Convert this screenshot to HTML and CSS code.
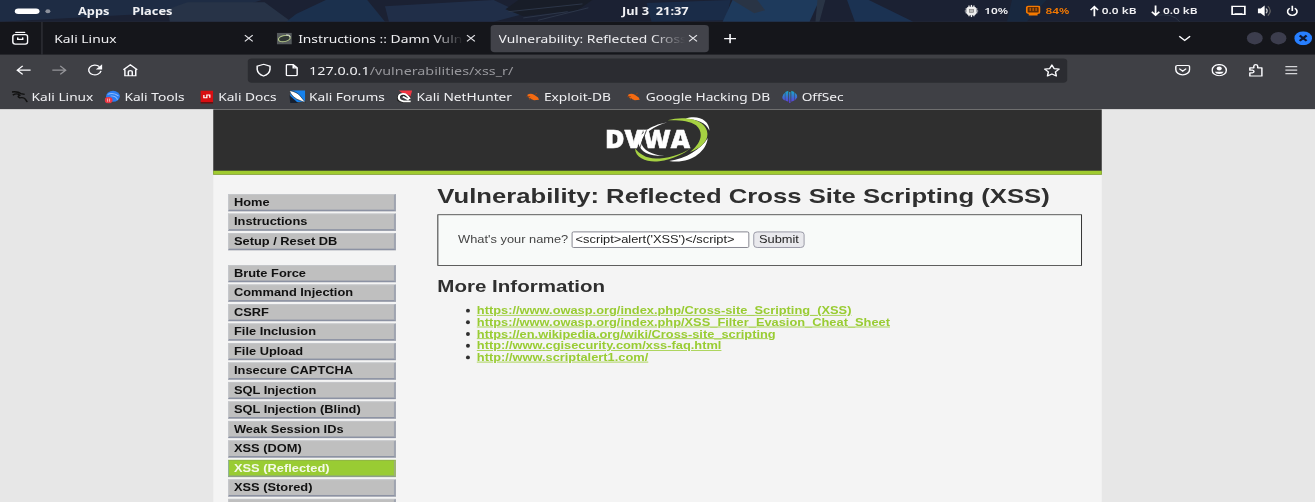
FILE: index.html
```html
<!DOCTYPE html>
<html lang="en">
<head>
<meta charset="utf-8">
<title>Vulnerability: Reflected Cross Site Scripting (XSS)</title>
<link rel="stylesheet" href="styles.css">
</head>
<body>
<div class="screen">
  <header class="topbar">
    <svg class="wallpaper" viewBox="0 0 1332 28" preserveAspectRatio="none">
      <path fill="#20304a" d="M0 0H265L235 12 0 28z"/>
      <path fill="#2b3a4e" d="M170 12L190 3H268L295 28H172z"/>
      <path fill="#1c3556" d="M300 18L330 0H372L390 28H290z"/>
      <path fill="#223350" d="M390 8L500 0 530 18 500 28H394z"/>
      <path fill="#171c25" d="M525 0H600L585 13 530 21 512 12z"/>
      <path fill="none" stroke="#354154" d="M515 15L590 5M530 23L575 15M545 26L596 10"/>
      <path fill="#1a3050" d="M655 4L740 0 735 26 660 28z"/>
      <path fill="#20436a" d="M742 0H830L820 28H732z"/>
      <path fill="#2e3b4c" d="M742 0H767L775 13 764 17zM828 0H836L830 28H826z"/>
      <path fill="#1c385d" d="M858 0H880L925 28H866z"/>
      <path fill="#182b43" d="M1025 0H1060L1040 28H1020z"/>
      <path fill="none" stroke="#384250" d="M1170 20Q1188 16 1195 28"/>
    </svg>
    <span class="workspaces"><i class="pill"></i><i class="dot"></i></span>
    <span>Apps</span>
    <span>Places</span>
    <span>Jul 3&nbsp; 21:37</span>
    <svg class="ic" width="14" height="16" viewBox="0 0 14 16"><rect x="2" y="2.500" width="10" height="11" rx="3" fill="#eee"/><path stroke="#eee" stroke-width="1.300" d="M4.500 1V15M7 0V16M9.500 1V15M1 5.500H13M0 8H14M1 10.500H13"/><rect x="5" y="6" width="4" height="4" fill="#bbb" stroke="#777" stroke-width=".7"/></svg>
    <span class="stat">10%</span>
    <svg class="ic" width="15" height="14" viewBox="0 0 15 14"><rect x="1" y="1" width="13" height="9" rx="2" fill="#5a2c08" stroke="#f57900" stroke-width="1.800"/><path stroke="#f57900" stroke-width="1" d="M4.500 3V7M7.500 3V7M10.500 3V7"/><path stroke="#f57900" stroke-width="2" d="M3 12H12"/></svg>
    <span class="stat hot">84%</span>
    <svg class="ic" width="9" height="16" viewBox="0 0 9 16"><path fill="none" stroke="#fff" stroke-width="1.800" d="M4.500 15V3M.7 7L4.500 2.500 8.300 7"/></svg>
    <span class="stat">0.0 kB</span>
    <svg class="ic" width="9" height="16" viewBox="0 0 9 16"><path fill="none" stroke="#fff" stroke-width="1.800" d="M4.500 1V13M.7 9L4.500 13.500 8.300 9"/></svg>
    <span class="stat">0.0 kB</span>
    <svg class="ic" width="15" height="14" viewBox="0 0 15 14"><path fill="none" stroke="#fff" stroke-width="1.800" d="M1 1H14V11.500H1z"/><path stroke="#fff" stroke-width="1.800" d="M3.500 10.800H11.500"/></svg>
    <svg class="ic" width="14" height="16" viewBox="0 0 14 16"><path fill="#fff" d="M0 5H3L7 1V15L3 11H0z"/><path fill="none" stroke="#ccc" stroke-width="1.300" d="M8.500 5Q10.500 8 8.500 11"/><path fill="none" stroke="#666" stroke-width="1.300" d="M10.300 2Q15 8 10.300 14"/></svg>
    <svg class="ic" width="12" height="16" viewBox="0 0 12 16"><path fill="none" stroke="#fff" stroke-width="1.700" d="M3.500 4.500A4.800 5 0 1 0 8.500 4.500M6 1.500V8"/></svg>
  </header>

  <div class="tabbar">
    <div class="tabview"><svg width="17" height="18" viewBox="0 0 17 18"><path fill="none" stroke="#fbfbfe" stroke-width="1.500" stroke-linecap="round" d="M4 1.500H13M3.500 4.500H13.500Q16 4.500 16 7V14Q16 16.500 13.500 16.500H3.500Q1 16.500 1 14V7Q1 4.500 3.500 4.500zM6 8.500V10.500H11V8.500"/></svg></div>
    <div class="tab tab-one"><span class="label">Kali Linux</span><svg class="x" viewBox="0 0 10 10"><path d="M1 1L9 9M9 1L1 9"/></svg></div>
    <div class="tab tab-two"><svg class="fav" width="16" height="15" viewBox="0 0 16 16"><path fill="#555a5c" d="M0 0H16V16H0z"/><ellipse cx="8" cy="8" rx="6.500" ry="4" transform="rotate(-18 8 8)" fill="#303735" stroke="#b5c98b" stroke-width="1.300"/><path fill="none" stroke="#eee" d="M10 3Q15 3 14 6"/></svg><span class="label fade">Instructions :: Damn Vulne</span><svg class="x" viewBox="0 0 10 10"><path d="M1 1L9 9M9 1L1 9"/></svg></div>
    <div class="tab tab-active"><span class="label fade">Vulnerability: Reflected Cross</span><svg class="x" viewBox="0 0 10 10"><path d="M1 1L9 9M9 1L1 9"/></svg></div>
    <svg class="plus" width="13" height="13" viewBox="0 0 13 13"><path stroke="#fbfbfe" stroke-width="1.600" d="M6.500 .5V12.500M.5 6.500H12.500"/></svg>
    <svg class="chevron" width="14" height="9" viewBox="0 0 14 9"><path fill="none" stroke="#fbfbfe" stroke-width="1.500" d="M1.500 1.500L7 7 12.500 1.500"/></svg>
    <div class="winbuttons"><i></i><i></i><svg width="18" height="18" viewBox="0 0 18 18"><circle cx="9" cy="9" r="9" fill="#277fff"/><path stroke="#101830" stroke-width="2.400" d="M5.500 5.500L12.500 12.500M12.500 5.500L5.500 12.500"/></svg></div>
  </div>

  <div class="navbar">
    <svg width="16" height="16" viewBox="0 0 16 16"><path d="M15 8H1.500M7 2.500L1.500 8 7 13.500"/></svg>
    <svg class="off" width="16" height="16" viewBox="0 0 16 16"><path d="M1 8H14.500M9 2.500L14.500 8 9 13.500"/></svg>
    <svg width="16" height="16" viewBox="0 0 16 16"><path d="M12.700 3.500A6.300 6.300 0 1 0 14.300 9"/><path fill="#fbfbfe" stroke="none" d="M15.500 .5V7H9z"/></svg>
    <svg width="16" height="18" viewBox="0 0 16 18"><path d="M1 8.500L8 2 15 8.500M2.500 8V16.200H13.500V8M6 16V11Q6 9.500 8 9.500T10 11V16"/></svg>
    <div class="urlbar">
      <svg width="16" height="18" viewBox="0 0 16 18"><path d="M8 1.500L14.500 4V8Q14 14 8 16.500 2 14 1.500 8V4z"/></svg>
      <svg width="13" height="16" viewBox="0 0 13 16"><path d="M2 1H8L12 5V14Q12 15 11 15H2Q1 15 1 14V2Q1 1 2 1zM8 1V5H12"/></svg>
      <span class="url"><b>127.0.0.1</b>/vulnerabilities/xss_r/</span>
      <svg width="17" height="17" viewBox="0 0 17 17"><path stroke-linejoin="round" d="M8.500 1.300L10.700 6 15.800 6.700 12.100 10.300 13 15.500 8.500 13 4 15.500 4.900 10.300 1.200 6.700 6.300 6z"/></svg>
    </div>
    <div class="actions">
      <svg width="16" height="16" viewBox="0 0 16 16"><path d="M2.500 2H13.500Q15 2 15 3.500V7A7 7 0 0 1 1 7V3.500Q1 2 2.500 2zM4.500 6L8 9.300 11.500 6"/></svg>
      <svg width="16" height="16" viewBox="0 0 16 16"><circle cx="8" cy="8" r="7.200"/><circle cx="8" cy="6" r="2.600" fill="#fbfbfe" stroke="none"/><path fill="#fbfbfe" stroke="none" d="M3.500 10H12.500Q11.500 13 8 13T3.500 10z"/></svg>
      <svg width="16" height="18" viewBox="0 0 16 18"><path stroke-linejoin="round" d="M2 16.500V12.500H4.500Q6.200 12.300 6.200 10.800T4.500 9H2V6H6V4Q6.200 2 8 2T10 4V6H14.200V16.500z"/></svg>
      <svg width="14" height="14" viewBox="0 0 14 14"><path opacity=".8" d="M1 2.500H13M1 7H13M1 11.500H13"/></svg>
    </div>
  </div>

  <div class="bookmarks">
    <svg width="17" height="18" viewBox="0 0 17 18"><path fill="none" stroke="#111" stroke-width="1.700" d="M0 3Q6 2 9 5L13 6M1 7Q5 4 8 7 5 9 8 10.500 12 9.500 13.500 12T15.500 16"/></svg><span>Kali Linux</span>
    <svg width="16" height="18" viewBox="0 0 16 18"><circle cx="8.500" cy="8.500" r="7" fill="#2b7cf2"/><path fill="none" stroke="#8fbdfb" stroke-width="1.200" d="M3 6Q9 3 14 8M6 8Q12 8 13 13"/><circle cx="4" cy="13.500" r="4" fill="#e83745"/><path stroke="#fbb" d="M3 11.500V15.500M5 11.500V15.500"/></svg><span>Kali Tools</span>
    <svg width="13" height="17" viewBox="0 0 13 17"><path fill="#d80e12" d="M0 0H13V15H0z"/><path fill="#611" d="M0 15H13V17H0z"/><path fill="none" stroke="#fff" stroke-width="1.300" d="M3.500 6V9.500H6.500V6H9.500V9.500"/></svg><span>Kali Docs</span>
    <svg width="17" height="18" viewBox="0 0 17 18"><path fill="#1682ec" d="M1 1H16V16H1z"/><path fill="#172030" d="M0 7L9 17H1z"/><path fill="#fff" stroke="#111" stroke-width=".6" d="M0 1Q8 3 11 8L16.500 16.500 12 14.500Q3 11 0 1z"/></svg><span>Kali Forums</span>
    <svg width="16" height="18" viewBox="0 0 16 18"><path fill="#f03642" d="M2 1H15.500L13 12z"/><path fill="none" stroke="#222" stroke-width="3.600" d="M13 10Q4 3 2 9T7 15H14"/><path fill="none" stroke="#fff" stroke-width="2.200" d="M13 12Q10 5 6 5.500T2 10 7 15H14M6 9L12 13"/></svg><span>Kali NetHunter</span>
    <svg width="14" height="14" viewBox="0 0 14 14"><path fill="#f46a11" d="M1 5Q4 2 8 4.500L12 8 13 11 8 11.500 3 9z"/><path stroke="#8b421d" d="M0 7L4 7M3 11L5 9M9 4L11 2.500"/></svg><span>Exploit-DB</span>
    <svg width="14" height="14" viewBox="0 0 14 14"><path fill="#f46a11" d="M1 5Q4 2 8 4.500L12 8 13 11 8 11.500 3 9z"/><path stroke="#8b421d" d="M0 7L4 7M3 11L5 9M9 4L11 2.500"/></svg><span>Google Hacking DB</span>
    <svg width="16" height="16" viewBox="0 0 16 16"><defs><linearGradient id="os" x1="0" y1="0" x2="0" y2="1"><stop offset="0" stop-color="#16a9ca"/><stop offset="1" stop-color="#6136da"/></linearGradient></defs><path fill="url(#os)" d="M3 3V13Q0 11 .5 8T3 3zM3.500 2L6.500 .5V14.500L3.500 13zM7.300 2H8.700V16H7.300zM9.500 .5L12.500 2V13L9.500 14.500zM13 3Q16 5 15.500 9L13 13z"/></svg><span>OffSec</span>
  </div>

  <main class="page">
    <div class="site">
      <div class="banner">
        <svg class="logo" viewBox="130 30 330 150" preserveAspectRatio="none">
          <path fill="#fff" d="M378 40C415 27 450 44 450 76 440 52 415 42 378 40zM445 98C440 142 390 177 330 167 380 160 425 132 445 98z"/>
          <path fill="#a6d142" d="M325 45C380 28 443 45 444 85 445 110 420 130 392 140 425 115 435 82 410 60 390 46 360 44 325 45z"/>
          <path fill="#fff" d="M325 51C270 60 235 90 238 115 245 140 270 153 315 152 280 148 250 135 247 112 250 85 285 62 325 51z"/>
          <path fill="#a6d142" d="M228 130C228 160 270 173 300 168 340 162 375 145 395 128 365 150 320 160 290 160 260 160 240 145 228 130z"/>
          <text x="138" y="128" textLength="254" lengthAdjust="spacingAndGlyphs" class="wordmark">DVWA</text>
          <path stroke="#2f2f2f" stroke-width="2.500" d="M262 75L242 128"/>
        </svg>
      </div>
      <div class="columns">
        <nav class="menu">
          <ul><li>Home</li><li>Instructions</li><li>Setup / Reset DB</li></ul>
          <ul><li>Brute Force</li><li>Command Injection</li><li>CSRF</li><li>File Inclusion</li><li>File Upload</li><li>Insecure CAPTCHA</li><li>SQL Injection</li><li>SQL Injection (Blind)</li><li>Weak Session IDs</li><li>XSS (DOM)</li><li class="selected">XSS (Reflected)</li><li>XSS (Stored)</li><li></li></ul>
        </nav>
        <section class="body">
          <h1>Vulnerability: Reflected Cross Site Scripting (XSS)</h1>
          <form class="vulnerable"><label for="name">What's your name?</label><input id="name" type="text" value="&lt;script&gt;alert('XSS')&lt;/script&gt;"><button type="button">Submit</button></form>
          <h2>More Information</h2>
          <ul class="links">
            <li><a>https://www.owasp.org/index.php/Cross-site_Scripting_(XSS)</a></li>
            <li><a>https://www.owasp.org/index.php/XSS_Filter_Evasion_Cheat_Sheet</a></li>
            <li><a>https://en.wikipedia.org/wiki/Cross-site_scripting</a></li>
            <li><a>http://www.cgisecurity.com/xss-faq.html</a></li>
            <li><a>http://www.scriptalert1.com/</a></li>
          </ul>
        </section>
      </div>
    </div>
  </main>
</div>
</body>
</html>
```
FILE: styles.css
```css
* { box-sizing: border-box; }
html, body { margin: 0; width: 1315px; height: 502px; overflow: hidden; background: #e7e7e7; }
svg { display: block; flex: none; }

/* The desktop is 1332x644, squeezed into the window. */
.screen {
  width: 1332px; height: 644px; overflow: hidden;
  display: flex; flex-direction: column;
  transform: scale(.98724, .7795); transform-origin: 0 0;
  background: #3f4045;
  font-family: "Noto Sans", sans-serif; color: #f0f0f3;
}

.topbar {
  position: relative; flex: none; height: 28px; padding-left: 15px;
  display: grid; align-items: center; white-space: nowrap;
  grid-template-columns: 64px 55px 496px 347px 20px 42px 20px 45px 12px 50px 12px 69px 27px 29px 14px;
  background: #1b2133; font-size: 13px; font-weight: 700; line-height: 28px;
}
.topbar > * { position: relative; }
.topbar .wallpaper { position: absolute; left: 0; top: 0; width: 1332px; height: 28px; opacity: .75; }
.stat { font-size: 12px; font-weight: 600; }
.hot { color: #f57900; }
.workspaces { display: flex; align-items: center; gap: 6px; }
.pill { width: 25px; height: 7px; border-radius: 4px; background: #fff; }
.dot { width: 5px; height: 5px; border-radius: 50%; background: #8c919c; }

.tabbar { flex: none; height: 42px; display: flex; align-items: center; background: #15161b; font-size: 14px; }
.tabview { width: 43px; height: 42px; padding-left: 12px; display: flex; align-items: center; border-right: 1px solid #3a3b42; }
.tab { height: 35px; display: flex; align-items: center; border-radius: 4px; white-space: nowrap; }
.tab .label { flex: 1; }
.fade { -webkit-mask-image: linear-gradient(90deg, #000 82%, transparent 100%); mask-image: linear-gradient(90deg, #000 82%, transparent 100%); }
.x { width: 10px; height: 10px; fill: none; stroke: #e4e4e8; stroke-width: 1.200; }
.tab-one { width: 202px; margin-left: 12px; }
.tab-two { width: 202px; margin-left: 23px; }
.fav { margin-right: 6px; }
.tab-two .label { width: 167px; flex: none; margin-right: 3px; }
.tab-active { width: 221px; margin-left: 15px; padding: 0 11px 0 8px; background: #42434a; }
.tab-active .label { width: 189px; flex: none; margin-right: 3px; }
.plus { margin-left: 15px; }
.chevron { margin-left: auto; margin-right: 56px; }
.winbuttons { display: flex; align-items: center; gap: 8px; margin-right: 3px; }
.winbuttons i { width: 16px; height: 16px; border-radius: 50%; background: #3c3d4d; }

.navbar { flex: none; height: 40px; padding-left: 16px; display: flex; align-items: center; gap: 20px; }
.navbar svg { fill: none; stroke: #fbfbfe; stroke-width: 1.500; }
.navbar .off { opacity: .45; }
.urlbar { width: 830px; height: 31px; margin-left: 91px; padding: 0 7px 0 8px; display: flex; align-items: center; border-radius: 4px; background: #2b2c31; font-size: 14.500px; }
.urlbar svg:first-child { margin-right: 14px; }
.url { flex: 1; margin-left: 11px; color: #97979c; }
.url b { font-weight: 400; color: #f0f0f3; }
.actions { margin-left: auto; padding-right: 17px; display: flex; align-items: center; gap: 21px; }

.bookmarks {
  flex: none; height: 30px; padding: 0 0 2px 12px; display: grid; align-items: center; white-space: nowrap;
  grid-template-columns: 20px 74px 20px 77px 18px 72px 20px 89px 20px 111px 18px 84px 19px 138px 20px 80px;
  font-size: 13.900px;
}

.page { flex: 1; min-height: 0; overflow: hidden; display: flex; justify-content: center; background: #e7e7e7; font: 13px "Liberation Sans", sans-serif; color: #2f2f2f; }
.site { width: 900px; background: #f4f4f4; }
.banner { height: 84px; padding-top: 8px; background: #2f2f2f; border-bottom: 5px solid #a0cb2f; }
.logo { width: 112px; height: 64px; margin: 0 auto; }
.wordmark { font: 800 76px "Open Sans", sans-serif; fill: #fff; stroke: #fff; stroke-width: 1.500; }
.columns { display: flex; }
.menu { width: 227px; padding: 25px 0 0 15px; font-weight: 700; color: #111; }
.menu ul { list-style: none; margin: 0 0 19px; padding: 0; display: grid; gap: 3px; }
.menu ul + ul { margin: 0; }
.menu li { width: 170px; height: 22px; padding-left: 5px; line-height: 19px; background: #bfbfbf; border: solid #c6c8cc; border-width: 1px 2px 2px 1px; border-right-color: #9fa4b0; border-bottom-color: #8c92a3; }
.menu .selected { background: #9c3; color: #f4f9e8; border-color: #8fb04a #9eb178 #8fa08b #8fb0a0; }
.body { width: 653px; padding-top: 12px; }
.body h1 { margin: 0; font-size: 26px; line-height: 30px; white-space: nowrap; }
.vulnerable { height: 66px; margin: 9px 0 15px; padding: 0 0 1px 20px; display: flex; align-items: center; border: 1px solid #333; background: #f8faf9; }
.vulnerable label { width: 115px; padding-bottom: 1px; color: #444; white-space: nowrap; }
.vulnerable input { width: 180px; height: 21px; padding: 0 3px; border: 1px solid #777782; border-radius: 2px; background: #fff; color: #222; font: 13px "Liberation Sans", sans-serif; }
.vulnerable button { width: 52px; height: 21px; margin-left: 4px; padding: 0; border: 1px solid #8f8f9d; border-radius: 4px; background: #e9e9ed; color: #222; font: 13px "Liberation Sans", sans-serif; }
.body h2 { margin: 0; font-size: 20.800px; line-height: 24px; }
.links { list-style: none; margin: 11px 0 0; padding-left: 29px; line-height: 15px; }
.links li { display: flex; align-items: center; gap: 7px; }
.links li::before { content: ""; width: 4px; height: 5px; border-radius: 50%; background: #2f2f2f; }
.links a { color: #9c3; font-weight: 700; text-decoration: underline; }
```
